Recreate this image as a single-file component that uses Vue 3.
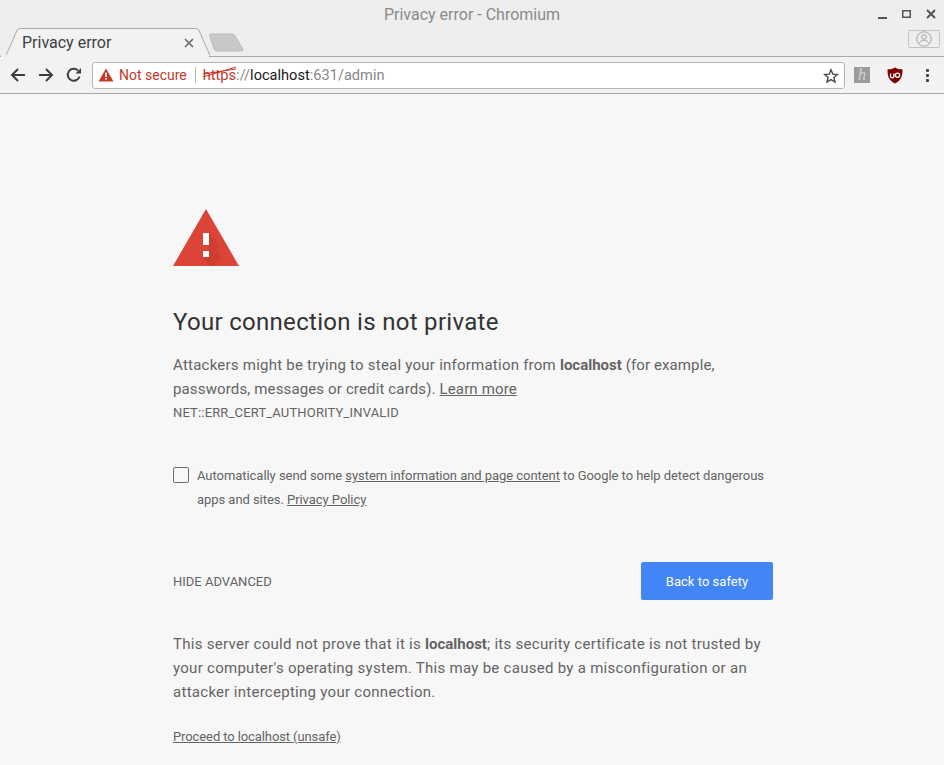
<script setup>
</script>

<template>
  <div class="window">
    <header class="chrome">
      <div class="titlebar">
        <span class="title">Privacy error - Chromium</span>
        <div class="controls">
          <svg width="12" height="12" viewBox="0 0 12 12"><rect x="1" y="9" width="9" height="2" fill="#555" /></svg>
          <svg width="12" height="12" viewBox="0 0 12 12"><rect x="1.75" y="2.75" width="7.5" height="6.5" fill="none" stroke="#555" stroke-width="1.5" /></svg>
          <svg width="12" height="12" viewBox="0 0 12 12"><path d="M2 2l8 8M10 2l-8 8" stroke="#555" stroke-width="2" fill="none" /></svg>
        </div>
      </div>
      <div class="tabstrip">
        <svg class="tabshape" width="240" height="29" viewBox="0 0 240 29">
          <path d="M0.5 27.500H6L17 2.500Q18 0.500 20 0.500H196Q198 0.500 199 2.500L210 27.500" fill="#f2f2f2" stroke="#a8a8a8" stroke-width="1" />
          <path d="M1 28H209" stroke="#f2f2f2" stroke-width="2" />
          <path d="M209.500 7.500Q209 6 211 6H232Q234 6 235 8L243 21Q243.500 23 241 23H217Q214.500 23 214 21Z" fill="#c8c8c8" stroke="#bdbdbd" />
        </svg>
        <span class="tabtitle">Privacy error</span>
        <svg class="tabclose" width="10" height="10" viewBox="0 0 10 10"><path d="M1 1l8 8M9 1l-8 8" stroke="#6b6b6b" stroke-width="1.700" /></svg>
        <div class="profile">
          <svg width="16" height="16" viewBox="0 0 16 16" fill="none" stroke="#a5a5a5"><circle cx="8" cy="8" r="7.200" /><circle cx="8" cy="6" r="2.300" /><path d="M3.500 12c.5-2 2.500-2.700 4.500-2.700s4 .7 4.500 2.700" /></svg>
        </div>
      </div>
      <div class="toolbar">
        <svg class="navicon" width="16" height="16" viewBox="0 0 16 16"><path d="M15 8H2M8 2L2 8l6 6" fill="none" stroke="#3c3f41" stroke-width="2" /></svg>
        <svg class="navicon" width="16" height="16" viewBox="0 0 16 16"><path d="M1 8h13M8 2l6 6-6 6" fill="none" stroke="#3c3f41" stroke-width="2" /></svg>
        <svg class="navicon" width="16" height="16" viewBox="0 0 16 16"><path d="M13.500 9.500A6 6 0 1 1 12 3.500" fill="none" stroke="#3c3f41" stroke-width="2" /><path d="M9.500 6.500H15V1z" fill="#3c3f41" /></svg>
        <div class="omnibox">
          <svg class="warn" width="16" height="14" viewBox="0 0 16 14"><path d="M8 0.500L15.500 13.500H0.500z" fill="#c53929" /><rect x="7.200" y="4.500" width="1.600" height="4.500" fill="#fff" /><rect x="7.200" y="10" width="1.600" height="1.600" fill="#fff" /></svg>
          <span class="notsecure">Not secure</span>
          <span class="sep"></span>
          <span class="url"><span class="scheme">https<svg class="strike" width="34" height="12" viewBox="0 0 34 12"><path d="M0 11L33 1M0 8L33 3" stroke="#c53929" stroke-width="1" fill="none" /></svg></span><span class="dim">://</span><span class="host">localhost</span><span class="dim">:631/admin</span></span>
          <svg class="star" width="16" height="16" viewBox="0 0 16 16"><path d="M8 1.800l1.800 4.300 4.600.4-3.500 3 1.100 4.500L8 11.600l-4 2.400 1.100-4.500-3.500-3 4.600-.4z" fill="none" stroke="#4a4a4a" stroke-width="1.400" /></svg>
        </div>
        <span class="ext-h">h</span>
        <svg class="ext-ub" width="16" height="17" viewBox="0 0 16 17"><path d="M8 .5C10 1.800 12 2.300 15.500 2.300c0 6.500-.8 11-7.500 14.200C1.300 13.300.5 8.800.5 2.300 4 2.300 6 1.800 8 .5z" fill="#800000" /><path d="M3.500 6.500v2.700a1.700 1.700 0 0 0 3.400 0V6.500" fill="none" stroke="#fff" stroke-width="1.300" /><circle cx="10.500" cy="8.200" r="2.100" fill="none" stroke="#fff" stroke-width="1.300" /></svg>
        <div class="menu"><i></i><i></i><i></i></div>
      </div>
    </header>
    <main class="page">
      <svg class="bigwarn" width="66" height="57" viewBox="0 0 66 57">
        <path d="M33 0L66 57H0z" fill="#db4437" />
        <path d="M36 24L46 37 43 42 48 49 41 57H37L30 48V42H36z" fill="#c53929" opacity="0.6" />
        <rect x="30" y="24" width="6" height="12" fill="#fff" />
        <rect x="30" y="42" width="6" height="6" fill="#fff" />
      </svg>
      <h1>Your connection is not private</h1>
      <p class="lead">Attackers might be trying to steal your information from <b>localhost</b> <span class="after">(for example,</span> <span class="second">passwords, messages or credit cards). <a>Learn more</a></span></p>
      <div class="code">NET::ERR_CERT_AUTHORITY_INVALID</div>
      <div class="optin">
        <span class="box"></span>
        <p>Automatically send some <a>system information and page content</a> to Google to help detect dangerous apps and sites. <a>Privacy Policy</a></p>
      </div>
      <div class="actions">
        <span class="advanced">HIDE ADVANCED</span>
        <button class="safety">Back to safety</button>
      </div>
      <p class="detail">This server could not prove that it is <b>localhost</b>; its security certificate is not trusted by your computer's operating system. This may be caused by a misconfiguration or an attacker intercepting your connection.</p>
      <a class="proceed">Proceed to localhost (unsafe)</a>
    </main>
  </div>
</template>

<style>
html, body { margin: 0; overflow: hidden; }
</style>

<style scoped>
.window { width: 944px; height: 765px; overflow: hidden; font-family: Roboto, sans-serif; background: #f7f7f7; }
.chrome { height: 94px; background: #eeeeee; border-bottom: 1px solid #a9a9a9; box-sizing: border-box; }
.titlebar { position: relative; height: 28px; display: flex; align-items: center; justify-content: center; }
.title { color: #8a8a8a; font-size: 16px; }
.controls { position: absolute; right: 7px; top: 8px; display: flex; gap: 12px; }
.tabstrip { position: relative; height: 29px; border-bottom: 1px solid #a9a9a9; box-sizing: border-box; }
.tabshape { position: absolute; left: 0; top: 0; overflow: visible; }
.tabtitle { position: absolute; left: 22px; top: 5px; font-size: 16px; color: #3c3f41; }
.tabclose { position: absolute; left: 184px; top: 10px; }
.profile { position: absolute; left: 908px; top: 2px; width: 30px; height: 16px; border: 1px solid #c4c4c4; border-radius: 2px; display: flex; align-items: center; justify-content: center; }
.toolbar { height: 36px; background: #f2f2f2; display: flex; align-items: center; }
.navicon { margin-left: 10px; margin-right: 2px; flex: none; }
.navicon + .navicon { margin-left: 10px; }
.omnibox { margin-left: 8px; width: 753px; height: 27px; box-sizing: border-box; background: #fff; border: 1px solid #b5b5b5; border-radius: 3px; display: flex; align-items: center; position: relative; }
.warn { margin-left: 5px; }
.notsecure { margin-left: 5px; color: #c53929; font-size: 14px; }
.sep { width: 1px; height: 16px; background: #b5b5b5; margin: 0 7px 0 8px; }
.url { font-size: 14.600px; color: #888; white-space: nowrap; }
.scheme { position: relative; color: #c53929; }
.strike { position: absolute; left: 0; top: 0; }
.host { color: #1a1a1a; }
.star { position: absolute; right: 5px; top: 5px; }
.ext-h { margin-left: 9px; width: 16px; height: 16px; background: #9b9b9b; color: #d4d4d4; font: italic 16px/16px "Liberation Serif", serif; text-align: center; }
.ext-ub { margin-left: 17px; }
.menu { margin-left: 23px; display: flex; flex-direction: column; gap: 2px; }
.menu i { width: 3px; height: 3px; border-radius: 1px; background: #444; display: block; }
.page { padding: 115px 0 0 173px; width: 600px; color: #646464; }
.bigwarn { display: block; }
h1 { margin: 41px 0 0; font-size: 24px; line-height: 30px; font-weight: 400; color: #333; letter-spacing: 0.3px; }
.lead, .detail { margin: 0; font-size: 15px; line-height: 24px; }
.lead { margin-top: 16px; letter-spacing: 0.235px; }
.lead .after { letter-spacing: 0.1px; }
.lead .second { letter-spacing: 0.14px; }
.lead b, .detail b { font-weight: 700; letter-spacing: 0; }
a { text-decoration: underline; }
.code { font-size: 13px; line-height: 16px; margin-top: 4px; text-transform: uppercase; letter-spacing: 0.16px; }
.optin { display: flex; margin-top: 43px; font-size: 13px; line-height: 24px; letter-spacing: -0.05px; }
.optin p { margin: 0; padding-left: 8px; flex: 1; }
.box { flex: none; width: 14px; height: 14px; border: 1px solid #6e6e6e; border-radius: 2px; margin-top: 3px; }
.actions { display: flex; align-items: center; justify-content: space-between; margin-top: 50px; }
.advanced { font-size: 13px; color: #646464; }
.safety { width: 132px; height: 38px; border: 0; border-radius: 2px; background: #4285f4; color: #fff; font: 400 13px Roboto, sans-serif; letter-spacing: 0.03px; }
.detail { margin-top: 32px; letter-spacing: 0.28px; }
.proceed { display: block; margin-top: 23px; font-size: 13px; line-height: 20px; letter-spacing: -0.1px; }
</style>
